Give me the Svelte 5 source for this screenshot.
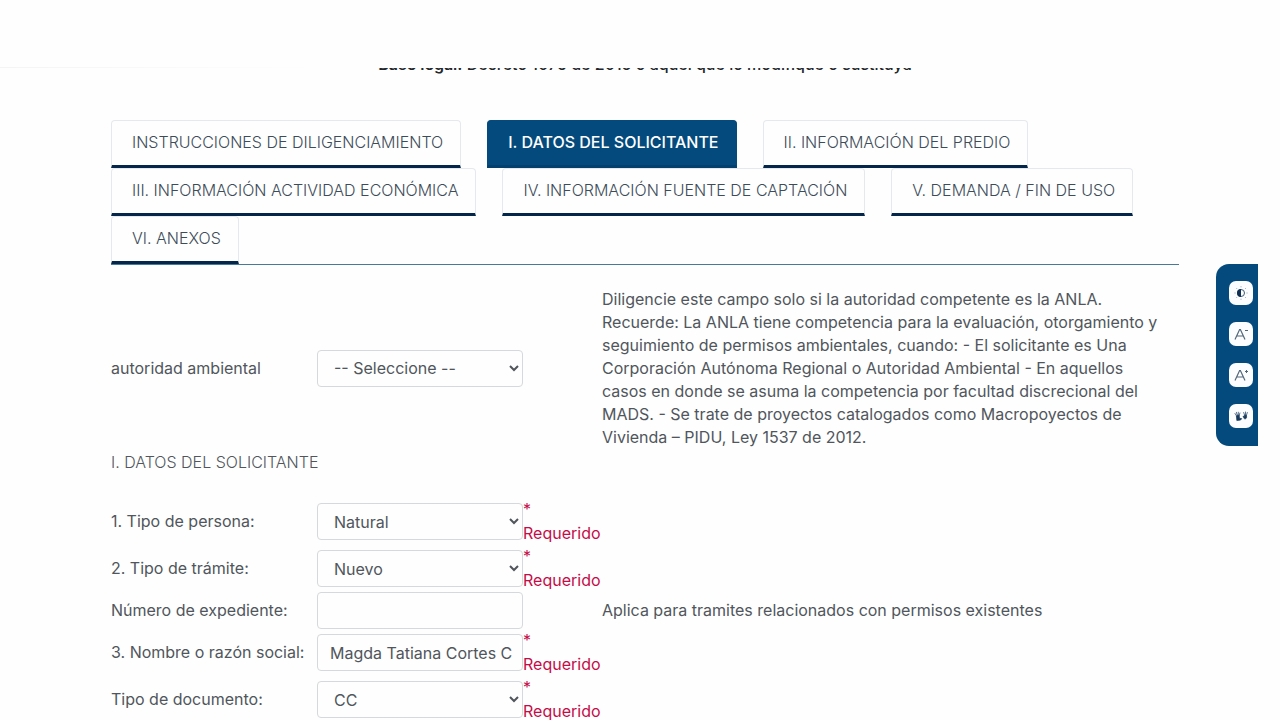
<script>
  const tabs = [
    'INSTRUCCIONES DE DILIGENCIAMIENTO',
    'I. DATOS DEL SOLICITANTE',
    'II. INFORMACIÓN DEL PREDIO',
    'III. INFORMACIÓN ACTIVIDAD ECONÓMICA',
    'IV. INFORMACIÓN FUENTE DE CAPTACIÓN',
    'V. DEMANDA / FIN DE USO',
    'VI. ANEXOS'
  ];
  let active = $state(1);

  const fields = [
    { id: 'persona', label: '1. Tipo de persona:', options: ['Natural'], required: true },
    { id: 'tramite', label: '2. Tipo de trámite:', options: ['Nuevo'], required: true },
    { id: 'expediente', label: 'Número de expediente:', value: '', help: 'Aplica para tramites relacionados con permisos existentes' },
    { id: 'nombre', label: '3. Nombre o razón social:', value: 'Magda Tatiana Cortes C', required: true },
    { id: 'documento', label: 'Tipo de documento:', options: ['CC'], required: true }
  ];
</script>

<header></header>

<main>
  <p class="legal"><b>Base legal:</b> Decreto 1076 de 2015 o aquel que lo modifique o sustituya</p>

  <div class="tabs" role="tablist">
    {#each tabs as tab, i}
      <button type="button" role="tab" class:active={active === i} aria-selected={active === i} onclick={() => (active = i)}>{tab}</button>
    {/each}
  </div>

  <form>
    <div class="row first">
      <label for="autoridad">autoridad ambiental</label>
      <select id="autoridad"><option>-- Seleccione --</option></select>
      <p class="help">
        Diligencie este campo solo si la autoridad competente es la ANLA. Recuerde: La ANLA tiene
        competencia para la evaluación, otorgamiento y seguimiento de permisos ambientales, cuando: -
        El solicitante es Una Corporación Autónoma Regional o Autoridad Ambiental - En aquellos casos
        en donde se asuma la competencia por facultad discrecional del MADS. - Se trate de proyectos
        catalogados como Macropoyectos de Vivienda – PIDU, Ley 1537 de 2012.
      </p>
    </div>

    <h2>I. DATOS DEL SOLICITANTE</h2>

    {#each fields as field}
      <div class="row">
        <label for={field.id}>{field.label}</label>
        {#if field.options}
          <select id={field.id}>
            {#each field.options as option}<option>{option}</option>{/each}
          </select>
        {:else}
          <input id={field.id} type="text" value={field.value} />
        {/if}
        {#if field.required}
          <div class="required"><span>*</span><span>Requerido</span></div>
        {/if}
        {#if field.help}<p class="help">{field.help}</p>{/if}
      </div>
    {/each}
  </form>
</main>

<aside aria-label="Accesibilidad">
  <button type="button" aria-label="Contraste">
    <svg viewBox="0 0 24 24">
      <circle cx="12" cy="12" r="3.500" fill="#fff" stroke="#3d5a78" />
      <path d="M12 8a4 4 0 0 0 0 8z" fill="#102f55" />
      <path d="M12 5.500v.5M12 18v.5M5.800 12h.5M17.800 12h.5M7.500 7.300l.4.4M16.300 16.300l.4.4M16.700 7.300l-.4.4M7.900 16.300l-.4.4" stroke="#a9b8c6" stroke-linecap="round" />
    </svg>
  </button>
  <button type="button" aria-label="Reducir letra">
    <svg viewBox="0 0 24 24" fill="none" stroke="#52667a">
      <path d="M6 17.500l4.600-10h.8l4.600 10M7.600 14h6.800" stroke-width="1.200" />
      <path d="M16 8.500h3" />
    </svg>
  </button>
  <button type="button" aria-label="Aumentar letra">
    <svg viewBox="0 0 24 24" fill="none" stroke="#52667a">
      <path d="M6 17.500l4.600-10h.8l4.600 10M7.600 14h6.800" stroke-width="1.200" />
      <path d="M16 8.500h3M17.500 7v3" />
    </svg>
  </button>
  <button type="button" aria-label="Lengua de señas">
    <svg viewBox="0 0 24 24" fill="#17385c" stroke="#17385c" stroke-width=".7" stroke-linecap="round" stroke-linejoin="round">
      <path d="M7.800 16.200l-.4-4.200 1-.8 1.800.1.300 3 2.200.3-.7 1.100-1.600.5z" />
      <path d="M7.600 12L6 9.500M8.300 11.400L7.400 8.300M9.300 11.200V8.200M10.200 11.500l.7-2.500" fill="none" />
      <path d="M15.300 14.600l-1.300-2.300 1.400-.1.200-1 1.800.1.300 1.900-1 1.500z" />
      <path d="M15.600 11.200L14.700 8.500M16.500 11V8M17.400 11.400l.9-2.900" fill="none" />
    </svg>
  </button>
</aside>

<style>
  :global(html) {
    scrollbar-width: none;
  }
  :global(body) {
    margin: 0;
    background: #fefefe;
    color: #50565c;
    font: 16px/23px Inter, 'Liberation Sans', sans-serif;
  }
  header {
    position: fixed;
    inset: 0 0 auto;
    height: 68px;
    background: linear-gradient(90deg, #f4f4f4, #fefefe 25%) bottom / 100% 1px no-repeat #fefefe;
    z-index: 1;
  }
  main {
    padding: 53px 101px 0 111px;
  }
  p,
  h2 {
    margin: 0;
  }
  .legal {
    color: #23272b;
    line-height: 22px;
    font-weight: 500;
    text-align: center;
  }
  .legal b {
    font-weight: 600;
  }
  .tabs {
    display: flex;
    flex-wrap: wrap;
    column-gap: 26px;
    margin-top: 45px;
    border-bottom: 1px solid #4a7899;
  }
  .tabs button {
    box-sizing: border-box;
    height: 48px;
    padding: 0 17px 2px 20px;
    border: 1px solid #e5e9ed;
    border-bottom: 3px solid #04264a;
    border-radius: 4px 4px 0 0;
    background: #fefefe;
    color: #3d4c59;
    font: 300 16px/23px Inter, 'Liberation Sans', sans-serif;
  }
  .tabs .active {
    border-color: #044a7c #044a7c #03406d;
    background: #044a7c;
    color: #fff;
    font-weight: 500;
  }
  form {
    padding-top: 21px;
  }
  .row {
    display: grid;
    grid-template-columns: 206px 206px 79px 1fr;
    align-items: center;
  }
  .first {
    min-height: 164px;
  }
  label {
    white-space: nowrap;
  }
  .help {
    grid-column: 4;
    padding-right: 8px;
  }
  h2 {
    margin-bottom: 24px;
    font-size: 16px;
    line-height: 24px;
    font-weight: 300;
  }
  input,
  select {
    box-sizing: border-box;
    width: 100%;
    height: 37px;
    padding: 6px 12px;
    border: 1px solid #d5d8dc;
    border-radius: 4px;
    background: #fefefe;
    color: #50565c;
    font: 16px/23px Inter, 'Liberation Sans', sans-serif;
  }
  input {
    padding-right: 8px;
  }
  .required {
    display: flex;
    flex-direction: column;
    color: #c40d48;
  }
  .required span:last-child {
    line-height: 24px;
  }
  aside {
    position: fixed;
    top: 264px;
    right: 22px;
    display: flex;
    flex-direction: column;
    gap: 17px;
    padding: 17px 5px 18px 13px;
    border-radius: 13px 0 0 13px;
    background: #044a7c;
  }
  aside button {
    width: 24px;
    height: 24px;
    padding: 0;
    border: 0;
    border-radius: 7px;
    background: #fcfdff;
  }
  svg {
    display: block;
    width: 24px;
    height: 24px;
  }
</style>
